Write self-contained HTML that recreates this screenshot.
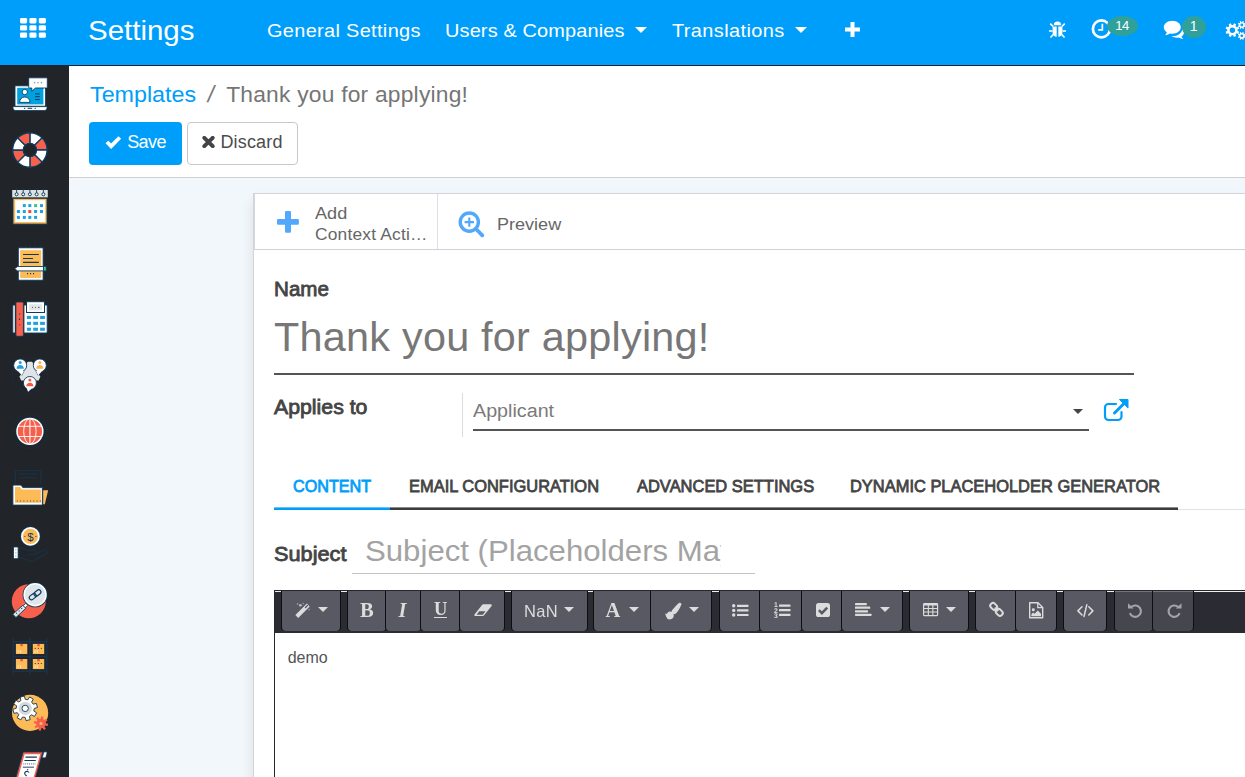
<!DOCTYPE html>
<html lang="en">
<head>
<meta charset="utf-8">
<title>Settings - Templates / Thank you for applying!</title>
<style>
*{box-sizing:border-box;margin:0;padding:0}
html,body{width:1245px;height:777px;overflow:hidden;background:#f2f7fb;font-family:"Liberation Sans",sans-serif;color:#666}
body{position:relative}
.x{position:absolute;white-space:nowrap;display:block}
.abs{position:absolute}
a{text-decoration:none}
svg{display:block}
#navbar{position:absolute;left:0;top:0;width:1245px;height:66px;background:#009efb;border-bottom:1px solid #16222e;color:#fff}
#navbar svg{position:absolute;fill:#fff}
.caret{position:absolute;width:0;height:0;border-left:6px solid transparent;border-right:6px solid transparent;border-top:6px solid #fff}
.badge{position:absolute;background:#30a09b;border-radius:50%}
#sidebar{position:absolute;left:0;top:66px;width:69px;height:711px;background:#212529;}
#sidebar svg{position:absolute;left:0;top:0}
#cp{position:absolute;left:69px;top:66px;width:1176px;height:112px;background:#fff;border-bottom:1px solid #cfcfcf}
.btn{position:absolute;top:122px;height:43px;border-radius:4px}
#save{left:89px;width:93px;background:#009efb}
#discard{left:187px;width:111px;background:#fff;border:1px solid #c8c8c8}
#sheet{position:absolute;left:253px;top:193px;width:1000px;height:600px;background:#fff;border:1px solid #d4d4d8;box-shadow:0 8px 12px rgba(0,0,0,.10)}
.ln{position:absolute}
#editor{position:absolute;left:274px;top:590px;width:990px;height:300px;border:1px solid #26262c;border-bottom:0;background:#fff}
#toolbar{position:absolute;left:0;top:0;width:100%;height:42px;background:#2b2b33;border-top:1px solid #efefef;will-change:transform}
.tb{position:absolute;top:-1px;height:40px;background:#595963;border-radius:0 0 4px 4px;box-shadow:-1px 0 0 #0e0e11,1px 0 0 #0e0e11}
.tb.d{background:#46464f;box-shadow:inset 0 1px 0 #74747a,-1px 0 0 #0e0e11,1px 0 0 #0e0e11}
.tb svg{position:absolute;overflow:visible}
.tb .cr{position:absolute;width:0;height:0;border-left:5px solid transparent;border-right:5px solid transparent;border-top:5px solid #dcdcdc}
.tb .tx{position:absolute;color:#dcdcdc;white-space:nowrap}
</style>
</head>
<body>
<header id="navbar">
  <svg style="left:20.200px;top:18.400px" width="27" height="21" viewBox="0 0 27 21"><rect x="0" y="0" width="7.100" height="5.400" rx="1.300"/><rect x="9.4" y="0" width="7.100" height="5.400" rx="1.300"/><rect x="18.8" y="0" width="7.100" height="5.400" rx="1.300"/><rect x="0" y="7.2" width="7.100" height="5.400" rx="1.300"/><rect x="9.4" y="7.2" width="7.100" height="5.400" rx="1.300"/><rect x="18.8" y="7.2" width="7.100" height="5.400" rx="1.300"/><rect x="0" y="14.4" width="7.100" height="5.400" rx="1.300"/><rect x="9.4" y="14.4" width="7.100" height="5.400" rx="1.300"/><rect x="18.8" y="14.4" width="7.100" height="5.400" rx="1.300"/></svg>
  <span class="x" style="top:14px;font:28.3px/32px 'Liberation Sans',sans-serif;color:#fff;left:87.86px;letter-spacing:-0.000px;transform:scaleX(1.0416);transform-origin:0 50%;">Settings</span>
  <nav>
    <span class="x" style="top:20px;font:18.6px/21px 'Liberation Sans',sans-serif;color:#fff;left:266.70px;letter-spacing:0.325px;transform:scaleX(1.0700);transform-origin:0 50%;">General Settings</span>
    <span class="x" style="top:20px;font:18.6px/21px 'Liberation Sans',sans-serif;color:#fff;left:445.43px;letter-spacing:0.145px;transform:scaleX(1.0700);transform-origin:0 50%;">Users &amp; Companies</span><i class="caret" style="left:635px;top:27px"></i>
    <span class="x" style="top:20px;font:18.6px/21px 'Liberation Sans',sans-serif;color:#fff;left:671.90px;letter-spacing:0.382px;transform:scaleX(1.0700);transform-origin:0 50%;">Translations</span><i class="caret" style="left:795px;top:27px"></i>
  </nav>
  <svg style="left:845px;top:22px" width="15" height="15" viewBox="0 0 15 15"><path d="M5.500 0h4v5.500H15v4H9.500V15h-4V9.500H0v-4h5.500z"/></svg>
  <svg style="left:1049px;top:21px" width="17" height="17" viewBox="0 0 17 17">
    <path d="M4.800 4.300a3.700 3.700 0 0 1 7.400 0z"/>
    <path d="M3.600 5.500h4.100v10.300c-2.300 0-4.100-1.700-4.100-4zM9.300 5.500h4.100v6.300c0 2.300-1.800 4-4.100 4z"/>
    <path d="M0 9.200h3.600v1.600H0zM13.400 9.200H17v1.600h-3.600zM.7 3.200l1.100-1.100 2.900 2.900-1.100 1.100zM16.300 3.200l-1.100-1.100-2.900 2.900 1.100 1.100zM.9 16l3.200-3.400 1.100 1.100L2 17zM16.100 16l-3.200-3.400-1.100 1.100L15 17z"/>
  </svg>
  <svg style="left:1091px;top:18px" width="21" height="21" viewBox="0 0 21 21"><circle cx="10.400" cy="10.900" r="8.500" fill="none" stroke="#fff" stroke-width="2.700"/><path d="M10.500 5.800h1.700v7h-5v-1.700h3.300z"/></svg>
  <span class="badge" style="left:1107px;top:16px;width:31px;height:20px"></span>
  <span class="x" style="top:18px;font:13px/15px 'Liberation Sans',sans-serif;color:#fff;left:1115.30px;letter-spacing:-0.530px;">14</span>
  <svg style="left:1163px;top:20px" width="23" height="20" viewBox="0 0 23 20">
    <path d="M9.300.8c4.700 0 8.500 2.900 8.500 6.500s-3.800 6.500-8.500 6.500c-.9 0-1.800-.1-2.600-.3c-1.300 1-2.900 1.600-4.600 1.700c.9-.9 1.500-1.900 1.700-3C2 11 .8 9.300.8 7.300C.8 3.700 4.600.8 9.300.8z"/>
    <path d="M19.300 9.200c1 .9 1.600 2 1.600 3.300c0 1.600-.9 3-2.400 4c.3 1 .9 1.800 1.800 2.500c-1.700-.1-3.300-.6-4.600-1.500c-2.500.5-5.200 0-7-1.500c5 .6 9.800-2 10.600-6.800z"/>
  </svg>
  <span class="badge" style="left:1182px;top:16px;width:24px;height:22px"></span>
  <span class="x" style="top:18px;font:14px/16px 'Liberation Sans',sans-serif;color:#fff;left:1189.80px;">1</span>
  <svg style="left:1225px;top:19px" width="22" height="21" viewBox="0 0 22 21"><path fill-rule="evenodd" d="M12.54 12.01L14.23 12.73L13.31 14.95L11.61 14.26L10.46 15.41L11.15 17.11L8.93 18.03L8.21 16.34L6.59 16.34L5.87 18.03L3.65 17.11L4.34 15.41L3.19 14.26L1.49 14.95L0.57 12.73L2.26 12.01L2.26 10.39L0.57 9.67L1.49 7.45L3.19 8.14L4.34 6.99L3.65 5.29L5.87 4.37L6.59 6.06L8.21 6.06L8.93 4.37L11.15 5.29L10.46 6.99L11.61 8.14L13.31 7.45L14.23 9.67L12.54 10.39zM10.10 11.20a2.7 2.7 0 1 0 -5.40 0a2.7 2.7 0 1 0 5.40 0z"/><path fill-rule="evenodd" d="M19.66 6.45L20.70 6.87L20.18 8.14L19.15 7.70L18.50 8.35L18.94 9.38L17.67 9.90L17.25 8.86L16.35 8.86L15.93 9.90L14.66 9.38L15.10 8.35L14.45 7.70L13.42 8.14L12.90 6.87L13.94 6.45L13.94 5.55L12.90 5.13L13.42 3.86L14.45 4.30L15.10 3.65L14.66 2.62L15.93 2.10L16.35 3.14L17.25 3.14L17.67 2.10L18.94 2.62L18.50 3.65L19.15 4.30L20.18 3.86L20.70 5.13L19.66 5.55zM18.20 6.00a1.4 1.4 0 1 0 -2.80 0a1.4 1.4 0 1 0 2.80 0z"/><path fill-rule="evenodd" d="M19.66 17.25L20.70 17.67L20.18 18.94L19.15 18.50L18.50 19.15L18.94 20.18L17.67 20.70L17.25 19.66L16.35 19.66L15.93 20.70L14.66 20.18L15.10 19.15L14.45 18.50L13.42 18.94L12.90 17.67L13.94 17.25L13.94 16.35L12.90 15.93L13.42 14.66L14.45 15.10L15.10 14.45L14.66 13.42L15.93 12.90L16.35 13.94L17.25 13.94L17.67 12.90L18.94 13.42L18.50 14.45L19.15 15.10L20.18 14.66L20.70 15.93L19.66 16.35zM18.20 16.80a1.4 1.4 0 1 0 -2.80 0a1.4 1.4 0 1 0 2.80 0z"/></svg>
</header>
<aside id="sidebar">
<svg width="69" height="711" viewBox="0 66 69 711">
<g>
<path d="M13 106.600h34v1.200c0 1.500-1.200 2.700-2.700 2.700H15.700c-1.500 0-2.700-1.200-2.700-2.700z" fill="#fff" stroke="#0d3a5c" stroke-width=".8"/>
<rect x="15" y="85.800" width="30.600" height="20.400" fill="#fff" stroke="#0d3a5c" stroke-width=".9"/>
<rect x="17.200" y="87.800" width="26.200" height="16.600" fill="#00a1df"/>
<circle cx="24.800" cy="92" r="2.700" fill="#fff" stroke="#0d3a5c" stroke-width=".9"/>
<path d="M19.600 102.400c0-3.200 2.300-5.400 5.200-5.400s5.200 2.200 5.200 5.400z" fill="#fff" stroke="#0d3a5c" stroke-width=".9"/>
<path d="M35 93.900h4.800M35 96.700h4.800M35 99.500h4.800" stroke="#0d3a5c" stroke-width="1"/>
<path d="M29.400 77.800h17.200a.7.700 0 0 1 .7.700v8.800a.7.700 0 0 1-.7.700H35.500l-3.700 3.200v-3.200h-2.400a.7.700 0 0 1-.7-.7v-8.800a.7.700 0 0 1 .7-.7z" fill="#fff" stroke="#0d3a5c" stroke-width=".9"/>
<path d="M34 82.700h1.200M37.400 82.700h1.200M40.800 82.700h1.200" stroke="#5a7084" stroke-width="1.100"/>
<path d="M24 108.300h1.200M27.600 108.300h4.600M34.600 108.300h1.200" stroke="#0d3a5c" stroke-width="1"/>
</g>
<g stroke="#0d3a5c" stroke-width="1.300" stroke-linejoin="round"><path d="M29.90 143.30L29.90 132.80A17.2 17.2 0 0 1 42.06 137.84L34.64 145.26A6.7 6.7 0 0 0 29.90 143.30z" fill="#fff"/><path d="M34.64 145.26L42.06 137.84A17.2 17.2 0 0 1 47.10 150.00L36.60 150.00A6.7 6.7 0 0 0 34.64 145.26z" fill="#f6604c"/><path d="M36.60 150.00L47.10 150.00A17.2 17.2 0 0 1 42.06 162.16L34.64 154.74A6.7 6.7 0 0 0 36.60 150.00z" fill="#fff"/><path d="M34.64 154.74L42.06 162.16A17.2 17.2 0 0 1 29.90 167.20L29.90 156.70A6.7 6.7 0 0 0 34.64 154.74z" fill="#f6604c"/><path d="M29.90 156.70L29.90 167.20A17.2 17.2 0 0 1 17.74 162.16L25.16 154.74A6.7 6.7 0 0 0 29.90 156.70z" fill="#fff"/><path d="M25.16 154.74L17.74 162.16A17.2 17.2 0 0 1 12.70 150.00L23.20 150.00A6.7 6.7 0 0 0 25.16 154.74z" fill="#f6604c"/><path d="M23.20 150.00L12.70 150.00A17.2 17.2 0 0 1 17.74 137.84L25.16 145.26A6.7 6.7 0 0 0 23.20 150.00z" fill="#fff"/><path d="M25.16 145.26L17.74 137.84A17.2 17.2 0 0 1 29.90 132.80L29.90 143.30A6.7 6.7 0 0 0 25.16 145.26z" fill="#f6604c"/></g>
<g><rect x="12.200" y="190" width="35.600" height="7.400" fill="#dde1e4"/><rect x="13" y="198.300" width="34" height="25.800" fill="#fdbb58" stroke="#0d3a5c" stroke-width=".9"/><rect x="15.200" y="200.200" width="30" height="21.800" fill="#fff"/><path d="M16.6 188v5" stroke="#0d3a5c" stroke-width=".9"/><circle cx="16.6" cy="194.300" r="1.500" fill="#fff" stroke="#0d3a5c" stroke-width="1"/><path d="M23.2 188v5" stroke="#0d3a5c" stroke-width=".9"/><circle cx="23.2" cy="194.300" r="1.500" fill="#fff" stroke="#0d3a5c" stroke-width="1"/><path d="M29.9 188v5" stroke="#0d3a5c" stroke-width=".9"/><circle cx="29.9" cy="194.300" r="1.500" fill="#fff" stroke="#0d3a5c" stroke-width="1"/><path d="M36.6 188v5" stroke="#0d3a5c" stroke-width=".9"/><circle cx="36.6" cy="194.300" r="1.500" fill="#fff" stroke="#0d3a5c" stroke-width="1"/><path d="M43.4 188v5" stroke="#0d3a5c" stroke-width=".9"/><circle cx="43.4" cy="194.300" r="1.500" fill="#fff" stroke="#0d3a5c" stroke-width="1"/><rect x="22.8" y="204.1" width="3" height="3" fill="#1ea2e0"/><rect x="28.3" y="204.1" width="3" height="3" fill="#1ea2e0"/><rect x="34.1" y="204.1" width="3" height="3" fill="#3ec28f"/><rect x="40.0" y="204.1" width="3" height="3" fill="#1ea2e0"/><rect x="16.9" y="210.0" width="3" height="3" fill="#1ea2e0"/><rect x="22.8" y="210.0" width="3" height="3" fill="#1ea2e0"/><rect x="28.3" y="210.0" width="3" height="3" fill="#f4493e"/><rect x="34.1" y="210.0" width="3" height="3" fill="#1ea2e0"/><rect x="40.0" y="210.0" width="3" height="3" fill="#1ea2e0"/><rect x="16.9" y="215.9" width="3" height="3" fill="#1ea2e0"/><rect x="22.8" y="215.9" width="3" height="3" fill="#1ea2e0"/><rect x="28.3" y="215.9" width="3" height="3" fill="#1ea2e0"/><rect x="34.1" y="215.9" width="3" height="3" fill="#1ea2e0"/></g>
<g>
<path d="M21 245.200v2.400M25.800 245.200v2.400M30.500 245.200v2.400M35.300 245.200v2.400M40.200 245.200v2.400" stroke="#17334d" stroke-width="1"/>
<rect x="18.300" y="247.800" width="24.800" height="32.400" fill="#fff" stroke="#0d3a5c" stroke-width=".9"/>
<rect x="20.200" y="250.200" width="21" height="27.800" fill="#fdbb58"/>
<path d="M23 254.500h15.800M23 258.500h10M23 262.400h15.800" stroke="#0d3a5c" stroke-width="1.100"/>
<path d="M27 273.600h1.100M30 273.600h1.100M33 273.600h1.100" stroke="#0d3a5c" stroke-width="1.100"/>
<path d="M14.600 268.700l3-2.200h26v4.400h-26z" fill="#fff" stroke="#0d3a5c" stroke-width=".9" stroke-linejoin="round"/>
<rect x="43.600" y="266.500" width="2.600" height="4.400" fill="#3ec28f" stroke="#0d3a5c" stroke-width=".7"/>
</g>
<g><rect x="12.800" y="305" width="34.400" height="28" rx="1" fill="#fff" stroke="#0d3a5c" stroke-width=".9"/><rect x="14.800" y="302" width="9.600" height="34.800" fill="#22262d"/><rect x="15.900" y="302" width="7.500" height="34.300" rx="1.300" fill="#f6604c" stroke="#0d3a5c" stroke-width=".8"/><path d="M19.600 313.500v.9M19.600 318.500v1.400M19.600 324.400v.9" stroke="#0d3a5c" stroke-width="1.100"/><rect x="26.500" y="301.700" width="18" height="10.800" fill="#fff" stroke="#0d3a5c" stroke-width="1"/><rect x="29.200" y="304.300" width="12.800" height="6" fill="#e2e6e9"/><path d="M32 307.400h1M35 307.400h1M38 307.400h1.600" stroke="#4a6076" stroke-width="1"/><rect x="26.9" y="315.9" width="4.1" height="3.100" fill="#1ea2e0"/><rect x="33.2" y="315.9" width="4.8" height="3.100" fill="#1ea2e0"/><rect x="40.1" y="315.9" width="4.8" height="3.100" fill="#1ea2e0"/><rect x="26.9" y="321.8" width="4.1" height="3.100" fill="#1ea2e0"/><rect x="33.2" y="321.8" width="4.8" height="3.100" fill="#1ea2e0"/><rect x="40.1" y="321.8" width="4.8" height="3.100" fill="#1ea2e0"/><rect x="26.9" y="327.7" width="4.1" height="3.100" fill="#1ea2e0"/><rect x="33.2" y="327.7" width="4.8" height="3.100" fill="#1ea2e0"/><rect x="40.1" y="327.7" width="4.8" height="3.100" fill="#1ea2e0"/></g>
<g>
<circle cx="29.900" cy="375.500" r="17.300" fill="none" stroke="#17334d" stroke-width="1" stroke-dasharray=".9 1.500"/>
<path d="M28.400 361.700h3c.7 0 1.200.4 1.300 1c.9 4.300 3.200 9.300 7.700 13.800l-1.700 4H21.100l-1.700-4c4.600-4.500 6.800-9.500 7.700-13.800c.1-.6.600-1 1.300-1z" fill="#dfe4e8"/>
<path d="M17.500 370.500l4.300 4.700 2.200-4.200z" fill="#fff" stroke="#0d3a5c" stroke-width=".9" stroke-linejoin="round"/><circle cx="20.2" cy="365.4" r="6.5" fill="#fff" stroke="#0d3a5c" stroke-width=".9"/><path d="M17.500 370.500l4.300 4.700 2.200-4.200z" fill="#fff"/><circle cx="20.2" cy="362.5" r="1.500" fill="#1ea2e0"/><path d="M16.599999999999998 368.7c0-2.300 1.600-3.600 3.600-3.600s3.600 1.300 3.600 3.600z" fill="#1ea2e0"/>
<path d="M42.500 370.500l-4.300 4.700-2.200-4.200z" fill="#fff" stroke="#0d3a5c" stroke-width=".9" stroke-linejoin="round"/><circle cx="39.8" cy="365.4" r="6.5" fill="#fff" stroke="#0d3a5c" stroke-width=".9"/><path d="M42.500 370.500l-4.300 4.700-2.200-4.200z" fill="#fff"/><circle cx="39.8" cy="362.5" r="1.500" fill="#fdb050"/><path d="M36.199999999999996 368.7c0-2.300 1.600-3.600 3.600-3.600s3.600 1.300 3.600 3.600z" fill="#fdb050"/>
<path d="M26.500 387.500l1.600 4.300 3.600-3.400z" fill="#fff" stroke="#0d3a5c" stroke-width=".9" stroke-linejoin="round"/><circle cx="29.9" cy="383" r="6.5" fill="#fff" stroke="#0d3a5c" stroke-width=".9"/><path d="M26.500 387.500l1.600 4.300 3.600-3.400z" fill="#fff"/><circle cx="29.9" cy="380.1" r="1.500" fill="#f4584a"/><path d="M26.299999999999997 386.3c0-2.300 1.600-3.600 3.600-3.600s3.600 1.300 3.600 3.600z" fill="#f4584a"/>
</g>
<g>
<circle cx="29.9" cy="431.3" r="17.600" fill="none" stroke="#17334d" stroke-width="1.100" stroke-dasharray=".9 1.600"/>
<circle cx="29.9" cy="431.3" r="14.300" fill="#0d3a5c"/>
<circle cx="29.9" cy="431.3" r="12.900" fill="#f5604d" stroke="#fff" stroke-width="1.500"/>
<g fill="none" stroke="#fff" stroke-width=".9"><ellipse cx="29.9" cy="431.3" rx="6.200" ry="12.700"/><path d="M29.9 418.6v25.400" stroke-width="1.500" stroke="#fbd0c9"/><path d="M18.0 426.3h23.800M18.0 436.5h23.800"/></g>
</g>
<g>
<path d="M15.400 484v-13.400h25.400v13.800" fill="none" stroke="#17334d" stroke-width="1"/>
<path d="M18.600 474h18.400M18.600 477.700h18.400" stroke="#17334d" stroke-width="1"/>
<path d="M43.200 490.300h5l-3.400 13.900h-1.600z" fill="#fdbb58"/>
<path d="M12.900 485.100h8.100l1.800 2.500h19.600v17.500H12.900z" fill="#fff" stroke="#0d3a5c" stroke-width=".9" stroke-linejoin="round"/>
<path d="M15 487h5l1.800 2.500h19v13.200H15z" fill="#fdbb58"/>
<path d="M16.800 501h24" stroke="#8a6f45" stroke-width="1.300" stroke-dasharray="1 2.300"/>
</g>
<g>
<circle cx="30.400" cy="536.400" r="10.200" fill="#0d3a5c"/>
<circle cx="30.400" cy="536.400" r="9.400" fill="#fff"/>
<circle cx="30.400" cy="536.400" r="7.700" fill="#fdbb58"/>
<text x="30.400" y="540.500" font-family="Liberation Sans,sans-serif" font-size="11.500" text-anchor="middle" fill="#0d3a5c">$</text>
<path d="M24.400 536.400h1M35.400 536.400h1" stroke="#0d3a5c" stroke-width="1"/>
<path d="M18.400 548.300h4c2 0 3.500 1.900 5.600 1.900h6.200c1.300 0 2.200 1 2.200 2.200s-.9 2.200-2.200 2.200h-4.800c-.8 0-1.400.4-1.700 1" fill="none" stroke="#17334d" stroke-width="1"/>
<path d="M36.300 553.200l8-3c1.200-.4 2.300.1 2.700 1.100s0 2-1 2.600l-12.400 6.900c-1.100.6-2.200.6-3.400.2l-11.800-4.300" fill="none" stroke="#17334d" stroke-width="1"/>
<rect x="13.600" y="547" width="4.500" height="11.700" fill="#fff" stroke="#0d3a5c" stroke-width=".8"/>
<path d="M15.800 549.500v.9M15.800 552.500v.9M15.800 555.500v.9" stroke="#6b7f92" stroke-width="1"/>
</g>
<g>
<circle cx="28.800" cy="601.300" r="17" fill="#f6604c"/>
<path d="M25.800 603.300l2 2-2.700 2.700-2-2z" fill="#fff" stroke="#0d3a5c" stroke-width=".8"/>
<path d="M22.800 605.300l3 3-9.800 9.200-3.200-3.300z" fill="#dfe4e8" stroke="#0d3a5c" stroke-width=".9" stroke-linejoin="round"/>
<path d="M16.300 613.700l.7-.7M18.800 611.300l.7-.7M21.300 608.900l.7-.7" stroke="#0d3a5c" stroke-width="1.100"/>
<circle cx="35.100" cy="594.800" r="12.500" fill="#0d3a5c"/>
<circle cx="35.100" cy="594.800" r="11.700" fill="#fff"/>
<circle cx="35.100" cy="594.800" r="10.200" fill="#dfe6eb"/>
<g fill="none" stroke="#0d3a5c" stroke-width="1.200" transform="translate(35.100 594.800) rotate(-38)"><rect x="-6.800" y="-2.200" width="7.600" height="4.400" rx="2.200"/><rect x="-.8" y="-2.200" width="7.600" height="4.400" rx="2.200"/></g>
</g>
<g><path d="M13.200 638v37M30 638v37M46.800 638v37M13.200 641.700h33.600M13.200 656.600h33.600M13.200 671.200h33.600" stroke="#17334d" stroke-width="1.500" fill="none"/><rect x="15.9" y="643.9" width="11.400" height="10.100" fill="#fdbb58"/><rect x="20.3" y="643.9" width="2.600" height="2.300" fill="#f0564a"/><path d="M18.1 650.1999999999999v2.600M20.5 650.1999999999999v2.600" stroke="#fde3b5" stroke-width="1.100"/><rect x="32.8" y="643.9" width="11.400" height="10.100" fill="#fdbb58"/><rect x="37.199999999999996" y="643.9" width="2.600" height="2.300" fill="#f0564a"/><path d="M35.0 650.1999999999999v2.600M37.4 650.1999999999999v2.600" stroke="#fde3b5" stroke-width="1.100"/><path d="M34.699999999999996 648.4h1.100M37.8 648.4h1.100M40.8 648.4h1.100" stroke="#3a3f45" stroke-width="1"/><rect x="15.9" y="659" width="11.400" height="10.100" fill="#fdbb58"/><rect x="20.3" y="659" width="2.600" height="2.300" fill="#f0564a"/><path d="M18.1 665.3v2.600M20.5 665.3v2.600" stroke="#fde3b5" stroke-width="1.100"/><rect x="32.8" y="659" width="11.400" height="10.100" fill="#fdbb58"/><rect x="37.199999999999996" y="659" width="2.600" height="2.300" fill="#f0564a"/><path d="M35.0 665.3v2.600M37.4 665.3v2.600" stroke="#fde3b5" stroke-width="1.100"/><path d="M34.699999999999996 663.5h1.100M37.8 663.5h1.100M40.8 663.5h1.100" stroke="#3a3f45" stroke-width="1"/></g>
<g>
<circle cx="30.100" cy="712.900" r="18.100" fill="#fdbb58"/>
<path d="M33.82 710.99L36.67 712.85L34.48 716.47L31.51 714.82L29.47 716.32L30.16 719.65L26.06 720.67L25.12 717.40L22.61 717.02L20.75 719.87L17.13 717.68L18.78 714.71L17.28 712.67L13.95 713.36L12.93 709.26L16.20 708.32L16.58 705.81L13.73 703.95L15.92 700.33L18.89 701.98L20.93 700.48L20.24 697.15L24.34 696.13L25.28 699.40L27.79 699.78L29.65 696.93L33.27 699.12L31.62 702.09L33.12 704.13L36.45 703.44L37.47 707.54L34.20 708.48z" fill="#fff" stroke="#0d3a5c" stroke-width=".9" stroke-linejoin="round"/>
<circle cx="25.200" cy="708.400" r="6.600" fill="#d5d9dd"/>
<circle cx="25.200" cy="708.400" r="3.200" fill="#fff" stroke="#0d3a5c" stroke-width=".9"/>
<path d="M45.90 723.33L48.19 723.81L47.75 726.02L45.44 725.57L44.59 726.84L45.87 728.80L43.99 730.05L42.68 728.10L41.17 728.40L40.69 730.69L38.48 730.25L38.93 727.94L37.66 727.09L35.70 728.37L34.45 726.49L36.40 725.18L36.10 723.67L33.81 723.19L34.25 720.98L36.56 721.43L37.41 720.16L36.13 718.20L38.01 716.95L39.32 718.90L40.83 718.60L41.31 716.31L43.52 716.75L43.07 719.06L44.34 719.91L46.30 718.63L47.55 720.51L45.60 721.82z" fill="#f4604d"/>
<circle cx="41" cy="723.500" r="1.500" fill="#fdbb58"/>
</g>
<g>
<path d="M23.200 752h19.600l-8 28H15.200z" fill="#f6604c" stroke="#0d3a5c" stroke-width=".8" stroke-linejoin="round"/>
<path d="M24.600 754.200h15.600l-7.300 25.800H17.400z" fill="#fff"/>
<path d="M42.200 757.800l1.500-5.300c1.200-1 2.600-.8 3.400.3l-1.400 5z" fill="#fff" stroke="#0d3a5c" stroke-width=".7"/>
<path d="M25.500 757.200h11.400M24.400 760.500h11.400" stroke="#0d3a5c" stroke-width="1.200"/>
<path d="M23.300 763.900h12" stroke="#6f8295" stroke-width="1.200" stroke-dasharray="1 .9"/>
<path d="M22.800 767.200h11.200" stroke="#4a6580" stroke-width="1.200"/>
<path d="M28.900 772.500c-.6-1.100-2.100-1.500-3.200-.8s-1.400 2-.5 2.900l1.500 1.400M27.400 770.300l.5-1.200" fill="none" stroke="#0d3a5c" stroke-width="1.100"/>
</g>
</svg>
</aside>
<section id="cp"></section>
<div id="breadcrumb">
  <a><span class="x" style="top:81px;font:22.8px/26px 'Liberation Sans',sans-serif;color:#009efb;left:90.00px;letter-spacing:-0.000px;transform:scaleX(1.0212);transform-origin:0 50%;">Templates</span></a>
  <span class="x" style="top:81px;font:23.5px/26px 'Liberation Sans',sans-serif;color:#777;left:207.50px;transform:skewX(-10deg);">/</span>
  <span class="x" style="top:81px;font:22.8px/26px 'Liberation Sans',sans-serif;color:#757575;left:226.20px;letter-spacing:0.216px;">Thank you for applying!</span>
</div>
<div id="buttons">
  <button class="btn" id="save" style="border:0"></button>
  <svg class="abs" style="left:105px;top:135px" width="17" height="14" viewBox="0 0 17 14"><path d="M1.900 7l4.200 4.200L14.800 2.500" fill="none" stroke="#fff" stroke-width="3.800"/></svg>
  <span class="x" style="top:132px;font:18px/20px 'Liberation Sans',sans-serif;color:#fff;left:127.20px;letter-spacing:-0.606px;">Save</span>
  <button class="btn" id="discard"></button>
  <svg class="abs" style="left:202px;top:136px" width="13" height="12" viewBox="0 0 13 12"><path d="M2.300 1.800l8.400 8.400M10.700 1.800l-8.400 8.400" fill="none" stroke="#444" stroke-width="3.900" stroke-linecap="round"/></svg>
  <span class="x" style="top:132px;font:18px/20px 'Liberation Sans',sans-serif;color:#4c4c4c;left:220.40px;letter-spacing:0.166px;">Discard</span>
</div>
<main id="sheet"></main>
<section id="form">
  <div class="ln" style="left:254px;top:249px;width:991px;height:1px;background:#cdd3da"></div>
  <div class="ln" style="left:254px;top:194px;width:1px;height:55px;background:#d3d8de"></div>
  <div class="ln" style="left:437px;top:194px;width:1px;height:55px;background:#dcdfe3"></div>
  <svg class="abs" style="left:277.300px;top:211.200px" width="22" height="22" viewBox="0 0 22 22"><path d="M9.200 0h3.600a1.200 1.200 0 0 1 1.200 1.200v6.900H20.700a1.200 1.200 0 0 1 1.200 1.200v3.300a1.200 1.200 0 0 1-1.200 1.200h-6.700V20.500a1.200 1.200 0 0 1-1.200 1.200H9.200a1.200 1.200 0 0 1-1.200-1.200v-6.700H1.200a1.200 1.200 0 0 1-1.200-1.200V9.300a1.200 1.200 0 0 1 1.200-1.200h6.800V1.200a1.200 1.200 0 0 1 1.200-1.200z" fill="#52a9fb"/></svg>
  <span class="x" style="top:203px;font:17.4px/20px 'Liberation Sans',sans-serif;color:#666;left:314.90px;letter-spacing:0.000px;transform:scaleX(1.0406);transform-origin:0 50%;">Add</span>
  <span class="x" style="top:224px;font:17.4px/20px 'Liberation Sans',sans-serif;color:#666;left:314.90px;letter-spacing:0.195px;">Context Acti…</span>
  <svg class="abs" style="left:458px;top:211px" width="27" height="27" viewBox="0 0 27 27"><circle cx="11.300" cy="11.100" r="9.100" fill="none" stroke="#52a9fb" stroke-width="3.400"/><path d="M18 18L24.300 24.300" stroke="#52a9fb" stroke-width="3.800" stroke-linecap="round"/><path d="M6.600 11.100h9.400M11.300 6.400v9.400" stroke="#52a9fb" stroke-width="2.100"/></svg>
  <span class="x" style="top:214px;font:17.4px/20px 'Liberation Sans',sans-serif;color:#666;left:497.36px;letter-spacing:0.000px;transform:scaleX(1.0376);transform-origin:0 50%;">Preview</span>

  <label class="x" style="top:278px;font:20.1px/22px 'Liberation Sans',sans-serif;color:#444;-webkit-text-stroke:0.8px #444;left:273.66px;transform:scaleX(1.0258);transform-origin:0 50%;">Name</label>
  <h1 class="x" style="top:314px;font:41.4px/46px 'Liberation Sans',sans-serif;color:#777;left:274.10px;letter-spacing:0.225px;">Thank you for applying!</h1>
  <div class="ln" style="left:274px;top:373px;width:860px;height:2px;background:#555"></div>

  <label class="x" style="top:396px;font:20.1px/22px 'Liberation Sans',sans-serif;color:#444;-webkit-text-stroke:0.8px #444;left:273.78px;transform:scaleX(1.0589);transform-origin:0 50%;">Applies to</label>
  <div class="ln" style="left:462px;top:393px;width:1px;height:44px;background:#dcdcdc"></div>
  <span class="x" style="top:400px;font:18.8px/21px 'Liberation Sans',sans-serif;color:#7a7a7a;left:473.20px;letter-spacing:0.000px;transform:scaleX(1.0494);transform-origin:0 50%;">Applicant</span>
  <div class="ln" style="left:473px;top:429px;width:616px;height:2px;background:#555"></div>
  <i class="abs" style="left:1073px;top:409px;border-left:5.500px solid transparent;border-right:5.500px solid transparent;border-top:5.500px solid #444"></i>
  <svg class="abs" style="left:1103px;top:399px" width="26" height="23" viewBox="0 0 26 23"><path d="M18.500 13v4.500a3.500 3.500 0 0 1-3.500 3.500H5.500a3.500 3.500 0 0 1-3.500-3.500V8.500A3.500 3.500 0 0 1 5.500 5h7.500" fill="none" stroke="#009efb" stroke-width="2.200" stroke-linecap="round"/><path d="M11.500 14L22 3.500" stroke="#009efb" stroke-width="3" stroke-linecap="round"/><path d="M16.500.5h8.500v8.500z" fill="#009efb" stroke="#009efb" stroke-width="1" stroke-linejoin="round"/></svg>

  <nav id="tabs">
    <span class="x" style="top:476px;font:17.3px/20px 'Liberation Sans',sans-serif;color:#009efb;-webkit-text-stroke:0.8px #009efb;left:293.13px;transform:scaleX(0.9355);transform-origin:0 50%;">CONTENT</span>
    <span class="x" style="top:476px;font:17.3px/20px 'Liberation Sans',sans-serif;color:#444;-webkit-text-stroke:0.8px #444;left:408.87px;transform:scaleX(0.9516);transform-origin:0 50%;">EMAIL CONFIGURATION</span>
    <span class="x" style="top:476px;font:17.3px/20px 'Liberation Sans',sans-serif;color:#444;-webkit-text-stroke:0.8px #444;left:636.72px;transform:scaleX(0.9526);transform-origin:0 50%;">ADVANCED SETTINGS</span>
    <span class="x" style="top:476px;font:17.3px/20px 'Liberation Sans',sans-serif;color:#444;-webkit-text-stroke:0.8px #444;left:850.47px;transform:scaleX(0.9515);transform-origin:0 50%;">DYNAMIC PLACEHOLDER GENERATOR</span>
    <div class="ln" style="left:1178px;top:509px;width:67px;height:1px;background:#dde2e6"></div>
    <div class="ln" style="left:390px;top:507px;width:788px;height:3px;background:linear-gradient(#8a8a8a 0,#8a8a8a 33%,#3c3c3c 33%)"></div>
    <div class="ln" style="left:274px;top:507px;width:116px;height:3px;background:linear-gradient(#66c4fd 0,#66c4fd 33%,#009efb 33%)"></div>
  </nav>

  <label class="x" style="top:543px;font:20.1px/22px 'Liberation Sans',sans-serif;color:#444;-webkit-text-stroke:0.8px #444;left:273.87px;transform:scaleX(1.0815);transform-origin:0 50%;">Subject</label>
  <span class="x" style="top:534px;font:29.7px/33px 'Liberation Sans',sans-serif;color:#a3a3a3;left:364.75px;letter-spacing:0.000px;transform:scaleX(1.0498);transform-origin:0 50%;width:338.97px;overflow:hidden;">Subject (Placeholders May</span>
  <div class="ln" style="left:352px;top:573px;width:403px;height:1px;background:#c4c4c4"></div>

  <div id="editor">
    <div id="toolbar">
      <div class="tb" style="left:7px;width:58px"><svg style="left:12.5px;top:11px" width="16" height="16" viewBox="0 0 16 16"><g fill="#dcdcdc"><path d="M0.400 13.100L11.900 1.600L14.700 4.400L3.200 15.900z"/><path d="M10 5.100L12 3.100a.7.700 0 0 1 1 1L11 6.100a.7.700 0 0 1-1-1z" fill="#595963"/><circle cx="5.400" cy="3.200" r="1.300" opacity=".8"/><path d="M2.600.8l.4.800.8.400-.8.400-.4.800-.4-.8-.8-.4.800-.4z" opacity=".55"/><path d="M8.200.6l.35.700.7.350-.7.350-.35.700-.35-.7-.7-.35.700-.35z" opacity=".55"/><path d="M14 6.600l.35.700.7.350-.7.350-.35.700-.35-.7-.7-.35.700-.35z" opacity=".6"/></g></svg><i class="cr" style="left:36px;top:16px"></i></div>
      <div class="tb" style="left:73px;width:38px"><span class="tx" style="left:12px;top:8px;font:bold 20.5px/22px 'Liberation Serif',serif">B</span></div>
      <div class="tb j" style="left:111px;width:35px"><span class="tx" style="left:12.5px;top:8px;font:italic bold 20.5px/22px 'Liberation Serif',serif">I</span></div>
      <div class="tb j" style="left:146px;width:39px"><span class="tx" style="left:13px;top:8px;font:bold 18.5px/20px 'Liberation Serif',serif;border-bottom:1.500px solid #dcdcdc;height:18.500px;top:8px">U</span></div>
      <div class="tb j" style="left:185px;width:44px"><svg style="left:13.6px;top:13px" width="18" height="12.5" viewBox="0 0 18 12.5"><path d="M9.200.3h7.600a1 1 0 0 1 .8 1.600L9.900 11.500a1.300 1.300 0 0 1-1 .5H1.300a1 1 0 0 1-.8-1.600L8.200.8A1.300 1.300 0 0 1 9.200.3z" fill="#dcdcdc"/><path d="M5.200 7.200h6.300l-2.500 3.200a.6.600 0 0 1-.5.250H2.700z" fill="#595963"/></svg></div>
      <div class="tb" style="left:237px;width:75px"><span class="tx" style="left:12px;top:10.3px;font:16.5px/20px 'Liberation Sans',sans-serif;letter-spacing:.3px">NaN</span><i class="cr" style="left:52px;top:16px"></i></div>
      <div class="tb" style="left:319px;width:57px"><span class="tx" style="left:11.5px;top:8px;font:bold 20.5px/22px 'Liberation Serif',serif">A</span><i class="cr" style="left:35px;top:16px"></i></div>
      <div class="tb j" style="left:376px;width:60px"><svg style="left:13.5px;top:10.5px" width="17" height="17.5" viewBox="0 0 17 17.5"><path d="M14 .9c1.300-.8 2.800.4 2.300 1.800C15.200 5.700 13 9.600 10.900 11.500c-1.200 1.100-2.900.8-3.800-.4c-.8-1.100-.6-2.500.3-3.400C9.600 5.500 12.100 2 14 .9z" fill="#dcdcdc"/><path d="M4.800 9.600a3.900 3.900 0 1 1-3.700 5c-.4-1.100-.6-2.100-.9-3.300c.9.700 1.500.7 2 .2c.6-1.100 1.500-1.800 2.600-1.900z" fill="#dcdcdc"/></svg><i class="cr" style="left:38px;top:16px"></i></div>
      <div class="tb" style="left:445px;width:40px"><svg style="left:12px;top:13px" width="17" height="13" viewBox="0 0 17 13"><g fill="#dcdcdc"><circle cx="1.700" cy="1.800" r="1.700"/><circle cx="1.700" cy="6.400" r="1.700"/><circle cx="1.700" cy="11" r="1.700"/><rect x="5" y=".7" width="11.500" height="2.200" rx=".4"/><rect x="5" y="5.300" width="11.500" height="2.200" rx=".4"/><rect x="5" y="9.900" width="11.500" height="2.200" rx=".4"/></g></svg></div>
      <div class="tb j" style="left:485px;width:42px"><svg style="left:14px;top:11px" width="17" height="17" viewBox="0 0 17 17"><g fill="#dcdcdc"><rect x="5" y="2.500" width="11.500" height="2.200" rx=".4"/><rect x="5" y="7.100" width="11.500" height="2.200" rx=".4"/><rect x="5" y="11.700" width="11.500" height="2.200" rx=".4"/></g><g fill="#dcdcdc" font-family="Liberation Sans,sans-serif" font-weight="bold" font-size="6.800" text-rendering="geometricPrecision"><text x="0" y="5.200">1</text><text x="0" y="10.800">2</text><text x="0" y="16.400">3</text></g></svg></div>
      <div class="tb j" style="left:527px;width:40px"><svg style="left:13.8px;top:12.2px" width="14" height="14" viewBox="0 0 14 14"><rect x="0" y="0" width="14" height="14" rx="2.600" fill="#dcdcdc"/><path d="M2.900 7.200l3 3l5.300-5.500" fill="none" stroke="#595963" stroke-width="2.500"/></svg></div>
      <div class="tb j" style="left:567px;width:60px"><svg style="left:13px;top:12.2px" width="17" height="13" viewBox="0 0 17 13"><g fill="#dcdcdc"><rect x="0" y="0" width="11.800" height="2.200" rx=".4"/><rect x="0" y="3.600" width="15.200" height="2.200" rx=".4"/><rect x="0" y="7.200" width="13" height="2.200" rx=".4"/><rect x="0" y="10.800" width="16.500" height="2.200" rx=".4"/></g></svg><i class="cr" style="left:38px;top:16px"></i></div>
      <div class="tb" style="left:635px;width:58px"><svg style="left:12.7px;top:12px" width="15.2" height="13.2" viewBox="0 0 15.2 13.2"><path fill-rule="evenodd" fill="#dcdcdc" d="M1.400 0h12.400a1.400 1.400 0 0 1 1.400 1.400v10.400a1.400 1.400 0 0 1-1.400 1.400H1.400a1.400 1.400 0 0 1-1.400-1.400V1.400A1.400 1.400 0 0 1 1.400 0zM1.200 2.600h3.600v2.400H1.200zM5.900 2.600h3.400v2.400H5.900zM10.400 2.600h3.600v2.400h-3.600zM1.200 6.100h3.600v2.400H1.200zM5.900 6.100h3.400v2.400H5.900zM10.400 6.100h3.600v2.400h-3.600zM1.200 9.600h3.600v2.400H1.200zM5.900 9.600h3.400v2.400H5.900zM10.400 9.600h3.600v2.400h-3.600z"/></svg><i class="cr" style="left:36px;top:16px"></i></div>
      <div class="tb" style="left:701px;width:40px"><svg style="left:13px;top:11.2px" width="15" height="15" viewBox="0 0 15 15"><g fill="none" stroke="#dcdcdc" stroke-width="2"><rect x="-3.600" y="-2.700" width="7.200" height="5.400" rx="2.400" transform="translate(4.700 4.400) rotate(45)"/><rect x="-3.600" y="-2.700" width="7.200" height="5.400" rx="2.400" transform="translate(10.300 10.400) rotate(45)"/></g><path d="M5.800 5.600l3.400 3.600" stroke="#dcdcdc" stroke-width="1.800"/></svg></div>
      <div class="tb j" style="left:741px;width:40px"><svg style="left:13px;top:10.7px" width="14.4" height="16.5" viewBox="0 0 14.4 16.5"><path d="M.7.700h8.300l4.700 4.700v10.400H.7z" fill="none" stroke="#dcdcdc" stroke-width="1.400" stroke-linejoin="round"/><path d="M8.800.8v4.800h4.800" fill="none" stroke="#dcdcdc" stroke-width="1.300"/><circle cx="4.300" cy="7.800" r="1.500" fill="#dcdcdc"/><path d="M2.400 14.300v-2.100l1.700-1.700 1.400 1.300 3.300-3.400 3.200 3.300v2.600z" fill="#dcdcdc"/></svg></div>
      <div class="tb" style="left:789px;width:42px"><svg style="left:12.8px;top:13px" width="16.8" height="13.3" viewBox="0 0 16.8 13.3"><g fill="none" stroke="#dcdcdc" stroke-width="1.500" stroke-linecap="round" stroke-linejoin="round"><path d="M5 2.800L.9 6.900L5 11"/><path d="M11.800 2.800l4.100 4.100-4.100 4.100"/><path d="M9.800.8L7 12.500"/></g></svg></div>
      <div class="tb d" style="left:840px;width:38px"><svg style="left:12.8px;top:12.2px" width="14.5" height="14.5" viewBox="0 0 14.5 14.5"><path d="M3.300 4A5.700 5.700 0 1 1 1.900 10.200" fill="none" stroke="#a3a3a8" stroke-width="2.100"/><path d="M0 .3l5.700 5.300H0z" fill="#a3a3a8"/></svg></div>
      <div class="tb d j" style="left:878px;width:40px"><svg style="left:13.6px;top:12.2px" width="14.5" height="14.5" viewBox="0 0 14.5 14.5"><g transform="translate(14.500 0) scale(-1 1)"><path d="M3.300 4A5.700 5.700 0 1 1 1.900 10.200" fill="none" stroke="#a3a3a8" stroke-width="2.100"/><path d="M0 .3l5.700 5.300H0z" fill="#a3a3a8"/></g></svg></div>
    </div>
  </div>
  <p class="x" style="top:649px;font:16px/17px 'Liberation Sans',sans-serif;color:#555;left:287.70px;">demo</p>
</section>
</body>
</html>
